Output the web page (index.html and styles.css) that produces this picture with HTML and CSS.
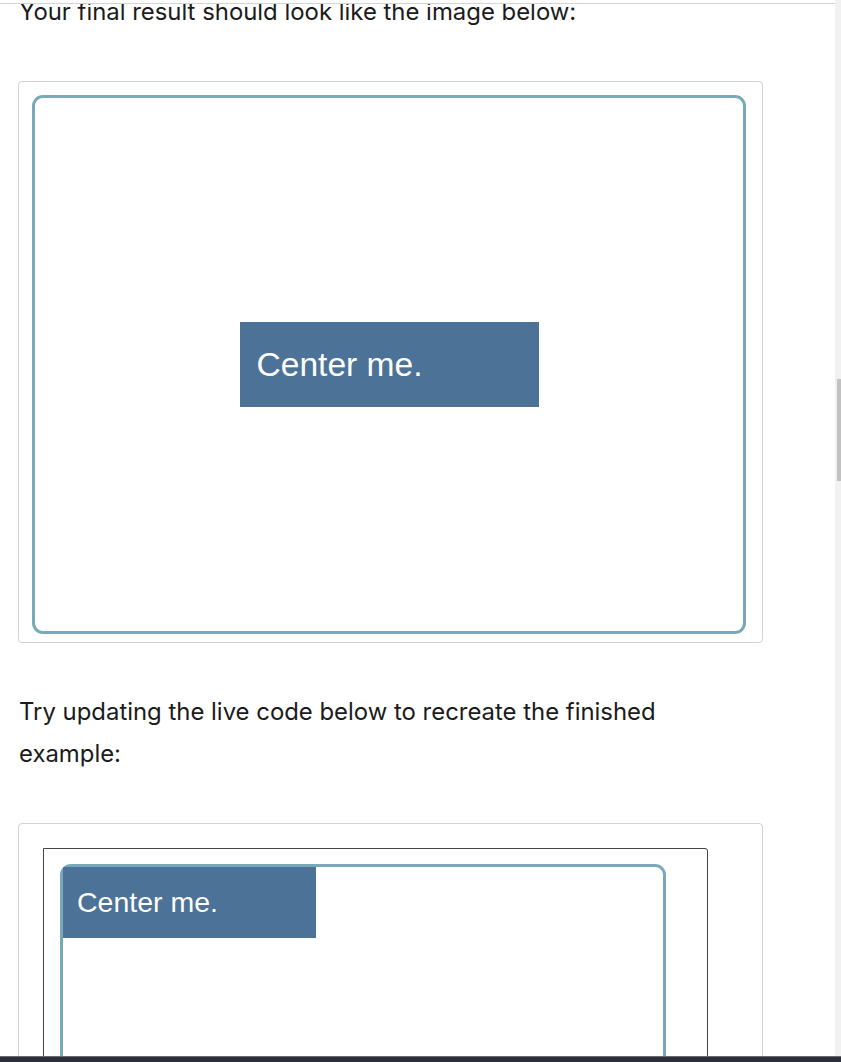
FILE: index.html
```html
<!DOCTYPE html>
<html>
<head>
<meta charset="utf-8">
<link rel="stylesheet" href="styles.css">
</head>
<body>
<div class="viewport">
  <div class="page">
    <div class="topbar"></div>
    <div class="clip">
      <div class="content">
        <p class="para first">Your final result should look like the image below:</p>
        <div class="card">
          <div class="result">
            <div class="box big">Center me.</div>
          </div>
        </div>
        <p class="para">Try updating the live code below to recreate the finished example:</p>
        <div class="card card-live">
          <div class="frame">
            <div class="parent">
              <div class="box small">Center me.</div>
            </div>
          </div>
        </div>
      </div>
    </div>
  </div>
  <div class="scrollbar"><div class="thumb"></div></div>
  <div class="bottombar"></div>
</div>
</body>
</html>
```

FILE: styles.css
```css
html, body {
  margin: 0;
  padding: 0;
  background: #ffffff;
}
.viewport {
  position: relative;
  width: 841px;
  height: 1062px;
  overflow: hidden;
  display: flex;
}
.page {
  flex: 1;
  display: flex;
  flex-direction: column;
  min-width: 0;
}
.topbar {
  height: 3px;
  border-bottom: 1px solid #d4d4d4;
  flex: none;
}
.clip {
  flex: 1;
  overflow: hidden;
}
.content {
  padding: 0 0 0 18px;
  width: 745px;
}
.para {
  margin: 0 0 48px 1px;
  font-family: Inter, "Noto Sans", sans-serif;
  font-size: 23.9px;
  line-height: 42px;
  color: #1b1b1b;
}
.para.first {
  margin-top: -13px;
  margin-bottom: 48px;
}
.card {
  border: 1px solid #d2d2d2;
  border-radius: 4px;
  padding: 13px 16px 8px 13px;
  margin-bottom: 48px;
}
.result {
  height: 533px;
  border: 3px solid #79a9b9;
  border-radius: 11px;
  display: flex;
  align-items: center;
  justify-content: center;
}
.box {
  background: #4c7297;
  color: #ffffff;
  font-family: "Liberation Sans", Arial, sans-serif;
  display: flex;
  align-items: center;
  box-sizing: border-box;
}
.box.big {
  width: 299px;
  height: 85px;
  padding: 0 0 0 17px;
  font-size: 33.6px;
}
.card-live {
  padding: 24px 54px 0 24px;
  height: 400px;
}
.frame {
  border: 1px solid #444444;
  border-radius: 0 3px 0 0;
  padding: 15px 41px 0 16px;
  height: 380px;
}
.parent {
  border: 3px solid #79a9b9;
  border-radius: 11px;
  height: 360px;
}
.box.small {
  width: 253px;
  height: 71px;
  padding: 0 0 0 14px;
  font-size: 28.5px;
}
.scrollbar {
  flex: none;
  width: 6px;
  background: #f1f1f1;
  position: relative;
}
.thumb {
  position: absolute;
  left: 2px;
  top: 379px;
  width: 4px;
  height: 102px;
  background: #c1c1c1;
}
.bottombar {
  position: absolute;
  left: 0;
  right: 0;
  bottom: 0;
  height: 5px;
  background: #2b2f3b;
  border-top: 1px solid #6a6a6a;
}
```
